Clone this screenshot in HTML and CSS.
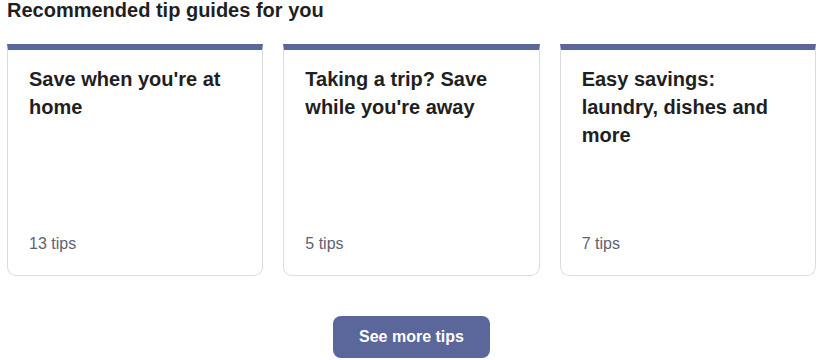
FILE: index.html
```html
<!DOCTYPE html>
<html>
<head>
<meta charset="utf-8">
<link rel="stylesheet" href="styles.css">
</head>
<body>
<section class="tips">
  <h2 class="tips-heading">Recommended tip guides for you</h2>
  <div class="cards">
    <a class="card" href="#">
      <span class="card-title">Save when you're at home</span>
      <span class="card-count">13 tips</span>
    </a>
    <a class="card" href="#">
      <span class="card-title">Taking a trip? Save while you're away</span>
      <span class="card-count">5 tips</span>
    </a>
    <a class="card" href="#">
      <span class="card-title">Easy savings: laundry, dishes and more</span>
      <span class="card-count">7 tips</span>
    </a>
  </div>
  <div class="actions">
    <button class="more-btn" type="button">See more tips</button>
  </div>
</section>
</body>
</html>
```
FILE: styles.css
```css
html, body {
  margin: 0;
  padding: 0;
  background: #ffffff;
}

body {
  font-family: "Liberation Sans", Arial, sans-serif;
  color: #1f1f1f;
}

.tips {
  padding: 0 6px 0 7px;
}

.tips-heading {
  margin: 0;
  font-size: 20px;
  line-height: 20px;
  font-weight: 700;
  color: #1f1f1f;
}

.cards {
  margin-top: 24px;
  display: grid;
  grid-template-columns: repeat(3, 1fr);
  column-gap: 20px;
}

.card {
  display: flex;
  flex-direction: column;
  justify-content: space-between;
  box-sizing: border-box;
  height: 232px;
  padding: 15px 20px 19px 21px;
  border: 1px solid #dcdcdc;
  border-top: 6px solid #5b669b;
  border-radius: 0 0 9px 9px;
  text-decoration: none;
  color: inherit;
  background: #fff;
}

.card-title {
  font-size: 20px;
  line-height: 28px;
  font-weight: 700;
  color: #1f1f1f;
}

.card-count {
  font-size: 16px;
  line-height: 24px;
  color: #616170;
}

.actions {
  display: flex;
  justify-content: center;
  margin-top: 40px;
}

.more-btn {
  width: 157px;
  height: 42px;
  border: none;
  border-radius: 8px;
  background: #5b669b;
  color: #ffffff;
  font-family: "Liberation Sans", Arial, sans-serif;
  font-size: 16px;
  font-weight: 700;
  cursor: pointer;
}
```
